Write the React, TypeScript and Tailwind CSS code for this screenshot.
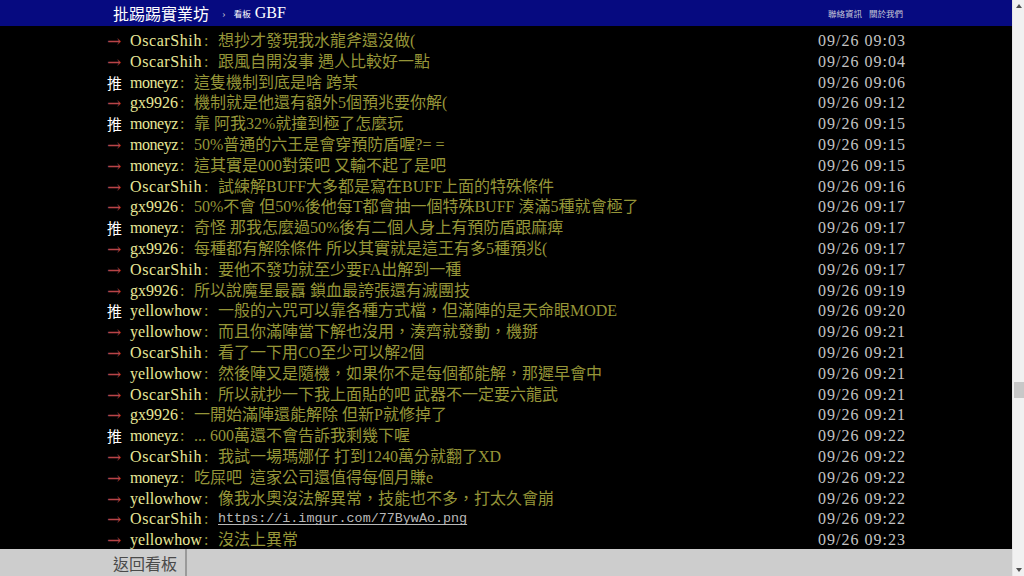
import React from "react";

type Push = { tag: "推" | "→"; id: string; text: string; time: string; link?: boolean };

const pushes: Push[] = [
  { tag: "→", id: "OscarShih", text: "想抄才發現我水龍斧還沒做(", time: "09/26 09:03" },
  { tag: "→", id: "OscarShih", text: "跟風自開沒事 遇人比較好一點", time: "09/26 09:04" },
  { tag: "推", id: "moneyz", text: "這隻機制到底是啥 跨某", time: "09/26 09:06" },
  { tag: "→", id: "gx9926", text: "機制就是他還有額外5個預兆要你解(", time: "09/26 09:12" },
  { tag: "推", id: "moneyz", text: "靠 阿我32%就撞到極了怎麼玩", time: "09/26 09:15" },
  { tag: "→", id: "moneyz", text: "50%普通的六王是會穿預防盾喔?= =", time: "09/26 09:15" },
  { tag: "→", id: "moneyz", text: "這其實是000對策吧 又輸不起了是吧", time: "09/26 09:15" },
  { tag: "→", id: "OscarShih", text: "試練解BUFF大多都是寫在BUFF上面的特殊條件", time: "09/26 09:16" },
  { tag: "→", id: "gx9926", text: "50%不會 但50%後他每T都會抽一個特殊BUFF 湊滿5種就會極了", time: "09/26 09:17" },
  { tag: "推", id: "moneyz", text: "奇怪 那我怎麼過50%後有二個人身上有預防盾跟麻痺", time: "09/26 09:17" },
  { tag: "→", id: "gx9926", text: "每種都有解除條件 所以其實就是這王有多5種預兆(", time: "09/26 09:17" },
  { tag: "→", id: "OscarShih", text: "要他不發功就至少要FA出解到一種", time: "09/26 09:17" },
  { tag: "→", id: "gx9926", text: "所以說魔星最囂 鎖血最誇張還有滅團技", time: "09/26 09:19" },
  { tag: "推", id: "yellowhow", text: "一般的六咒可以靠各種方式檔，但滿陣的是天命眼MODE", time: "09/26 09:20" },
  { tag: "→", id: "yellowhow", text: "而且你滿陣當下解也沒用，湊齊就發動，機掰", time: "09/26 09:21" },
  { tag: "→", id: "OscarShih", text: "看了一下用CO至少可以解2個", time: "09/26 09:21" },
  { tag: "→", id: "yellowhow", text: "然後陣又是隨機，如果你不是每個都能解，那遲早會中", time: "09/26 09:21" },
  { tag: "→", id: "OscarShih", text: "所以就抄一下我上面貼的吧 武器不一定要六龍武", time: "09/26 09:21" },
  { tag: "→", id: "gx9926", text: "一開始滿陣還能解除 但新P就修掉了", time: "09/26 09:21" },
  { tag: "推", id: "moneyz", text: "... 600萬還不會告訴我剩幾下喔", time: "09/26 09:22" },
  { tag: "→", id: "OscarShih", text: "我試一場瑪娜仔 打到1240萬分就翻了XD", time: "09/26 09:22" },
  { tag: "→", id: "moneyz", text: "吃屎吧\u00a0\u00a0這家公司還值得每個月賺e", time: "09/26 09:22" },
  { tag: "→", id: "yellowhow", text: "像我水奧沒法解異常，技能也不多，打太久會崩", time: "09/26 09:22" },
  { tag: "→", id: "OscarShih", text: "https://i.imgur.com/77BywAo.png", time: "09/26 09:22", link: true },
  { tag: "→", id: "yellowhow", text: "沒法上異常", time: "09/26 09:23" },
];

// Times-metric advance widths (per 1000 em) used to spread user ids over fixed 8px cells
const W: Record<string, number> = {
  a: 444, c: 444, e: 444, g: 500, h: 500, i: 278, l: 278, m: 778, n: 500, o: 500, r: 333,
  s: 389, w: 722, x: 500, y: 500, z: 444, O: 722, S: 556, "9": 500, "2": 500, "6": 500,
};
function idSpacing(id: string) {
  const natural = id.split("").reduce((s, c) => s + ((W[c] ?? 500) * 16) / 1000, 0);
  return (id.length * 8 - natural) / id.length;
}

const FONT = { fontFamily: '"Liberation Serif", "Noto Sans CJK TC", serif' };
const CJK = { fontFamily: '"Noto Sans CJK TC", sans-serif' };

export default function App() {
  return (
    <div className="flex h-screen w-full overflow-hidden bg-black" style={FONT}>
      <div className="flex flex-1 flex-col min-w-0">
        {/* top bar */}
        <div className="h-[26px] shrink-0 bg-[#060a80]">
          <div className="mx-auto flex h-full w-[800px] items-center justify-between pl-[7px] pr-[3px]">
            <div className="flex items-center">
              <span className="text-[16px] leading-none text-white" style={CJK}>
                批踢踢實業坊
              </span>
              <span className="ml-[13px] text-[11px] leading-none text-[#bbbbcc]">›</span>
              <span className="ml-[8px] text-[8.5px] leading-none text-white" style={CJK}>
                看板
              </span>
              <span className="ml-[4px] text-[16px] leading-none text-white">GBF</span>
            </div>
            <div className="flex items-center gap-[7px] text-[8.5px] leading-none text-[#c8c8d8]" style={CJK}>
              <span>聯絡資訊</span>
              <span>關於我們</span>
            </div>
          </div>
        </div>

        {/* push list */}
        <div className="flex-1 overflow-hidden pt-[5px]">
          <div className="mx-auto w-[800px] pl-[1px]">
            {pushes.map((p, i) => (
              <div key={i} className="flex h-[20.8px] items-center justify-between whitespace-nowrap text-[16px] leading-[20.8px]">
                <div className="flex h-full items-center">
                  {p.tag === "推" ? (
                    <span className="inline-block w-[23px] leading-[20.8px] text-[15px] text-white" style={CJK}>
                      推
                    </span>
                  ) : (
                    <span
                      className="inline-block w-[23px] leading-[20.8px] text-[17px] text-[#b84448]"
                      style={{ fontFamily: '"DejaVu Serif", "DejaVu Sans", serif' }}
                    >
                      →
                    </span>
                  )}
                  <span className="inline-block text-[#e8e898]" style={{ letterSpacing: idSpacing(p.id) }}>
                    {p.id}
                  </span>
                  <span className="inline-block w-[16px] pl-[2px] text-[#959538]">:</span>
                  {p.link ? (
                    <span
                      className="text-[13.4px] text-[#b8b8b8] underline underline-offset-2"
                      style={{ fontFamily: '"Liberation Mono", monospace' }}
                    >
                      {p.text}
                    </span>
                  ) : (
                    <span className="text-[#959538]">{p.text}</span>
                  )}
                </div>
                <span className="tracking-[1px] text-[#c4c4c4]">{p.time}</span>
              </div>
            ))}
          </div>
        </div>

        {/* bottom bar */}
        <div className="h-[27px] shrink-0 bg-[#cdcdcd]">
          <div className="mx-auto flex h-full w-[800px]">
            <div
              className="flex h-full items-center border-r-2 border-[#9a9a9a] pl-[7px] pr-[8px] text-[16px] text-[#4a4a4a]"
              style={CJK}
            >
              返回看板
            </div>
          </div>
        </div>
      </div>

      {/* scrollbar */}
      <div className="flex h-full w-[12px] shrink-0 flex-col items-center border-l border-[#e6e6e6] bg-[#f1f1f1]">
        <div className="flex h-[12px] w-full items-center justify-center">
          <svg width="6" height="4" viewBox="0 0 6 4">
            <path d="M3 0 L6 4 L0 4 Z" fill="#505050" />
          </svg>
        </div>
        <div className="flex-1 w-full">
          <div className="mx-auto mt-[370px] h-[16px] w-[10px] bg-[#c8c8c8]" />
        </div>
        <div className="flex h-[12px] w-full items-center justify-center">
          <svg width="6" height="4" viewBox="0 0 6 4">
            <path d="M0 0 L6 0 L3 4 Z" fill="#505050" />
          </svg>
        </div>
      </div>
    </div>
  );
}
